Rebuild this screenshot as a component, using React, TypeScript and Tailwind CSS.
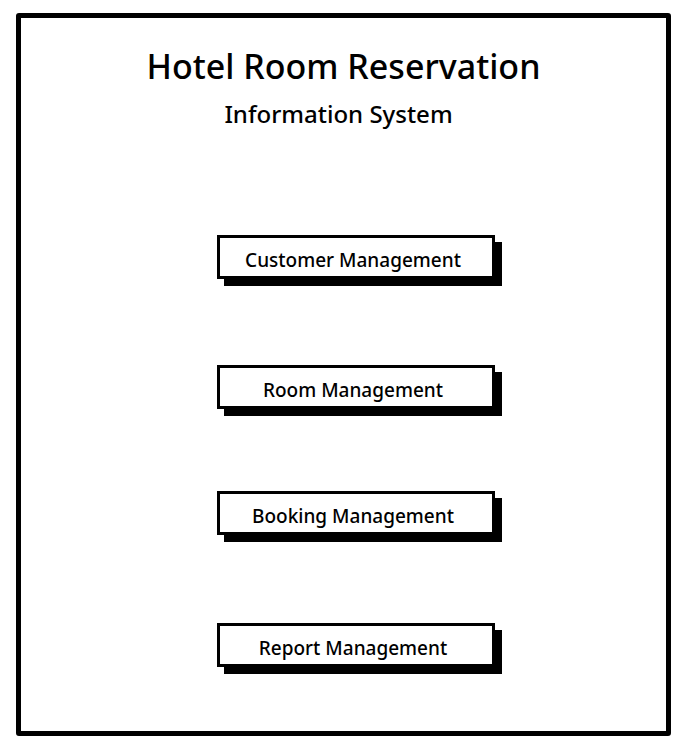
import React from "react";

const buttons = [
  { label: "Customer Management", mt: "mt-[106px]" },
  { label: "Room Management", mt: "mt-[86px]" },
  { label: "Booking Management", mt: "mt-[82px]" },
  { label: "Report Management", mt: "mt-[88px]" },
];

export default function App() {
  return (
    <div
      className="w-[700px] h-[754px] bg-white pt-[13px] pl-[16px] text-black"
      style={{ fontFamily: '"Noto Sans", "Open Sans", sans-serif' }}
    >
      <div className="w-[655px] h-[723px] border-[5px] border-black rounded-[3px] flex flex-col">
        <div className="mt-[27px] text-center text-[34px] leading-[42px] font-medium">
          Hotel Room Reservation
        </div>
        <div className="mt-[12px] text-center text-[24px] leading-[30px] font-medium pr-[10px]">
          Information System
        </div>
        {buttons.map((b) => (
          <div
            key={b.label}
            className={`${b.mt} ml-[196px] w-[278px] h-[44px] border-[3px] border-black bg-white shadow-[7px_7px_0_0_#000] flex items-center justify-center pt-[6px] pr-[6px] text-[19px] leading-[24px] font-medium`}
          >
            {b.label}
          </div>
        ))}
      </div>
    </div>
  );
}
